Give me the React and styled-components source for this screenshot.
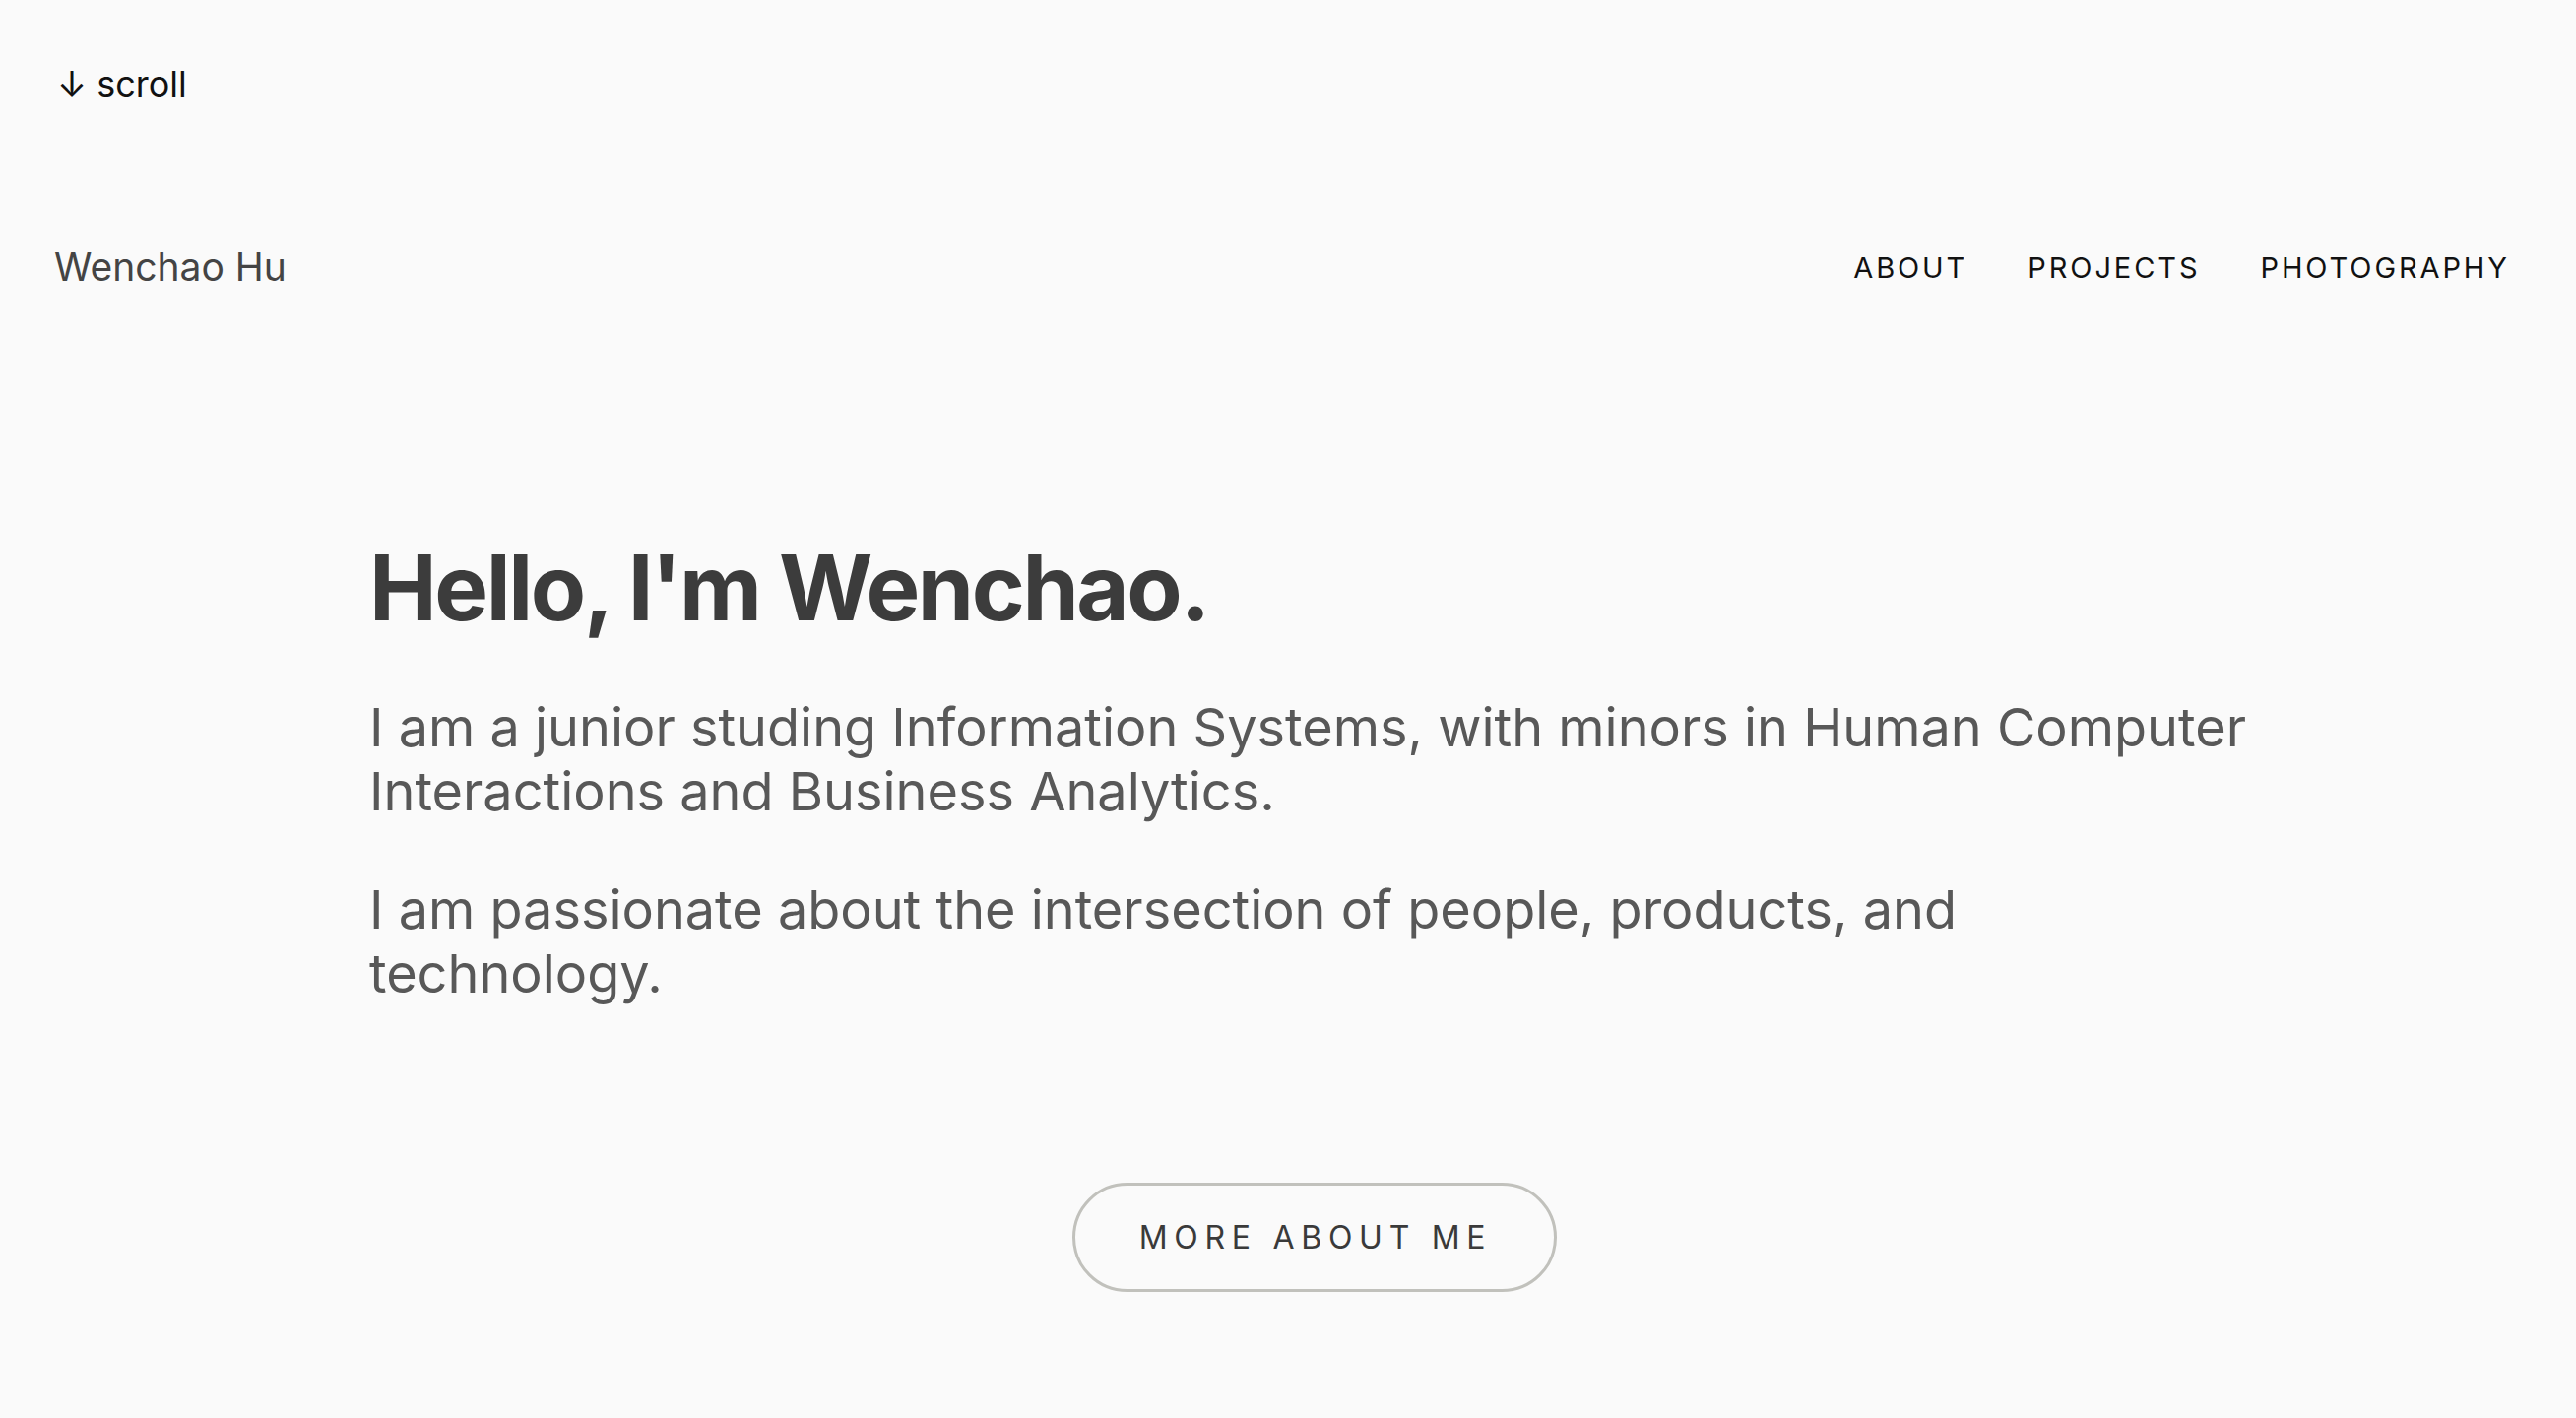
import React from "react";
import styled, { createGlobalStyle } from "styled-components";

const GlobalStyle = createGlobalStyle`
  html, body {
    margin: 0;
    padding: 0;
    background: #fafafa;
  }
  body {
    font-family: Inter, "Noto Sans", "Liberation Sans", sans-serif;
    -webkit-font-smoothing: antialiased;
  }
  * { box-sizing: border-box; }
`;

const Page = styled.div`
  min-height: 1440px;
  background: #fafafa;
  padding-top: 64px;
`;

const ScrollHint = styled.div`
  padding-left: 58px;
  font-size: 36px;
  line-height: 42px;
  color: #111;
`;

const Header = styled.header`
  margin-top: 141px;
  padding: 0 70px 0 55px;
  display: flex;
  align-items: center;
  justify-content: space-between;
`;

const Brand = styled.a`
  font-size: 39px;
  line-height: 48px;
  color: #444;
  text-decoration: none;
`;

const Nav = styled.nav`
  display: flex;
  align-items: center;
  gap: 64px;
`;

const NavLink = styled.a`
  font-size: 29px;
  letter-spacing: 0.1em;
  margin-right: -0.1em;
  color: #111;
  text-decoration: none;
  text-transform: uppercase;
`;

const Main = styled.main`
  margin-top: 247px;
  padding-left: 375px;
`;

const Content = styled.section`
  width: 1920px;
  display: flex;
  flex-direction: column;
`;

const Title = styled.h1`
  margin: 0;
  font-size: 92px;
  line-height: 110px;
  font-weight: 700;
  letter-spacing: -0.026em;
  color: #3c3c3c;
`;

const Lead = styled.p`
  max-width: 1916px;
  margin: ${(p) => (p.$first ? "54px" : "55px")} 0 0;
  font-size: 54px;
  line-height: 65px;
  color: #585858;
`;

const ButtonRow = styled.div`
  margin-top: 180px;
  display: flex;
  justify-content: center;
`;

const PillButton = styled.a`
  display: inline-flex;
  align-items: center;
  justify-content: center;
  height: 111px;
  padding: 0 63px 0 65px;
  border: 3.5px solid #c1c1bc;
  border-radius: 999px;
  font-size: 32px;
  letter-spacing: 0.21em;
  color: #3a3a3a;
  text-decoration: none;
  text-transform: uppercase;
`;

export default function App() {
  return (
    <>
      <GlobalStyle />
      <Page>
        <ScrollHint>↓ scroll</ScrollHint>
        <Header>
          <Brand href="#">Wenchao Hu</Brand>
          <Nav>
            <NavLink href="#">About</NavLink>
            <NavLink href="#">Projects</NavLink>
            <NavLink href="#">Photography</NavLink>
          </Nav>
        </Header>
        <Main>
          <Content>
            <Title>Hello, I'm Wenchao.</Title>
            <Lead $first>
              I am a junior studing Information Systems, with minors in Human
              Computer Interactions and Business Analytics.
            </Lead>
            <Lead>
              I am passionate about the intersection of people, products, and
              technology.
            </Lead>
            <ButtonRow>
              <PillButton href="#">More about me</PillButton>
            </ButtonRow>
          </Content>
        </Main>
      </Page>
    </>
  );
}
